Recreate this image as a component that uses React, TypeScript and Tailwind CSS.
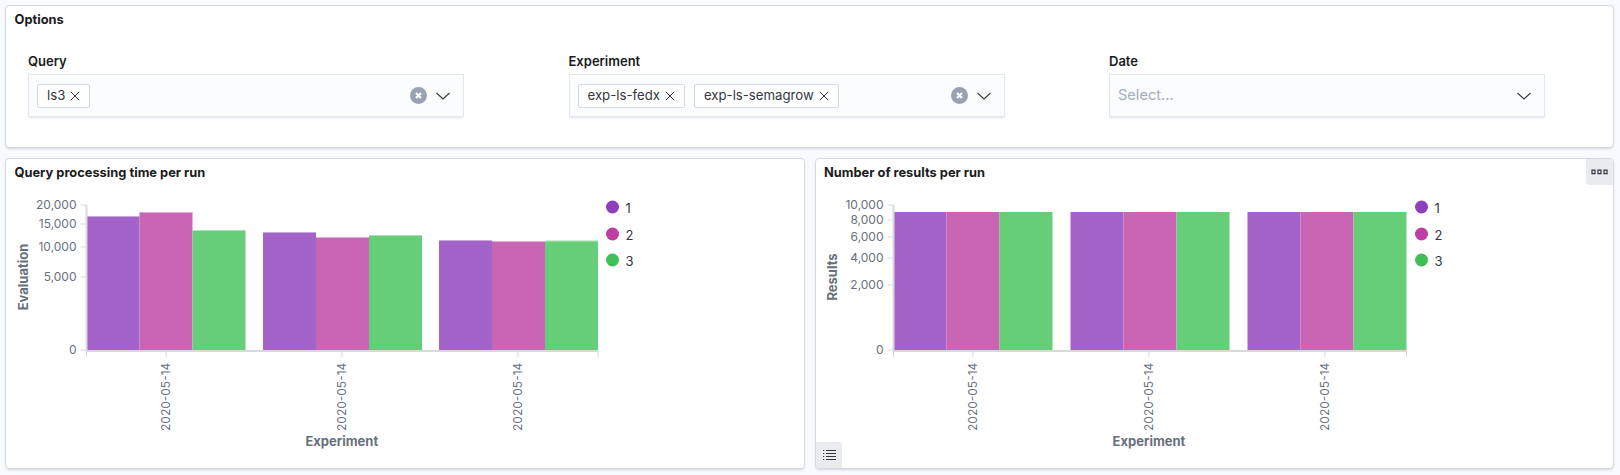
const PURPLE = "#a363c9";
const PINK = "#ca65b4";
const GREEN = "#66cd79";

function Chevron() {
  return (
    <svg width="16" height="16" viewBox="0 0 16 16" className="shrink-0 text-[#343741]">
      <path d="M1.5 5 L8 11 L14.5 5" fill="none" stroke="currentColor" strokeWidth="1.1" />
    </svg>
  );
}

function Cross() {
  return (
    <svg width="10" height="10" viewBox="0 0 10 10" className="shrink-0 text-[#343741]">
      <path d="M.8.8 9.2 9.2M9.2.8.8 9.2" fill="none" stroke="currentColor" strokeWidth="1" />
    </svg>
  );
}

function ClearButton() {
  return (
    <svg width="17" height="17" viewBox="0 0 17 17" className="shrink-0">
      <circle cx="8.5" cy="8.5" r="8.5" fill="#98a2b3" />
      <path d="M6 6l5 5M11 6l-5 5" fill="none" stroke="#fff" strokeWidth="2.2" />
    </svg>
  );
}

function Chip({ label }: { label: string }) {
  return (
    <span className="flex h-6 items-center gap-[5px] rounded-[2px] border border-[#d3dae6] bg-white px-[9px] text-[13.2px] text-[#343741]">
      {label}
      <Cross />
    </span>
  );
}

function Control({ label, chips }: { label: string; chips: string[] }) {
  return (
    <div className="w-[436px]">
      <div className="mb-[4px] h-[18px] text-[13px] leading-[18px] font-semibold text-[#1a1c21]">{label}</div>
      <div className="flex h-[43px] items-center border border-[#e3e7f0] bg-[#fbfcfd] pr-[12px] pl-2 shadow-[0_2px_2px_-1px_rgba(152,162,179,0.3)]">
        <div className="flex flex-1 items-center gap-[9px]">
          {chips.map((c) => (
            <Chip key={c} label={c} />
          ))}
          {chips.length === 0 && <span className="pt-px text-[14.6px] text-[#a5adbb]">Select...</span>}
        </div>
        <div className="flex items-center gap-[8px]">
          {chips.length > 0 && <ClearButton />}
          <Chevron />
        </div>
      </div>
    </div>
  );
}

type ChartProps = {
  axisX: number;
  groups: number[];
  tops: number[];
  ticks: [string, number][];
  yTitle: string;
  yTitleX: number;
  legendX: number;
  titleCenter: number;
  labelCenters: number[];
  highlight?: boolean;
};

// all y values are page pixels; svg starts at y=184, so subtract it
const Y0 = 184;
const BASE = 350;

function Chart({ axisX, groups, tops, ticks, yTitle, yTitleX, legendX, titleCenter, labelCenters, highlight }: ChartProps) {
  const colors = [PURPLE, PINK, GREEN];
  const w = 53;
  return (
    <svg width="796" height="282" className="block" style={{ fontFamily: "Inter, sans-serif" }}>
      {groups.map((gx, g) =>
        colors.map((c, i) => {
          const top = tops[g * 3 + i];
          return (
            <g key={`${g}-${i}`}>
              <rect x={gx + i * w} y={top - Y0} width={w} height={BASE - top} fill={c} />
              {highlight && <rect x={gx + i * w} y={top - Y0} width={w} height="1" fill="#fff" fillOpacity="0.45" />}
            </g>
          );
        }),
      )}
      <path d={`M${axisX} ${205 - Y0}V${BASE + 1 - Y0}`} stroke="#d9d9d9" strokeWidth="2" />
      <path d={`M${axisX} ${BASE + 1 - Y0}H${groups[2] + 3 * w}`} stroke="#d9d9d9" strokeWidth="2" />
      {ticks.map(([label, y]) => (
        <g key={label}>
          <path d={`M${axisX - 6} ${y - Y0}H${axisX}`} stroke="#d9d9d9" strokeWidth="1" />
          <text x={axisX - 10} y={y - Y0 + 4} textAnchor="end" fontSize="12" fill="#69707d">
            {label}
          </text>
        </g>
      ))}
      <path d={`M${axisX} ${BASE - Y0}v7M${groups[2] + 3 * w} ${BASE - Y0}v7`} stroke="#d9d9d9" strokeWidth="1" />
      {labelCenters.map((x) => (
        <g key={x}>
          <path d={`M${x} ${BASE - Y0}v7`} stroke="#d9d9d9" strokeWidth="1" />
          <text transform={`translate(${x + 4} ${431 - Y0}) rotate(-90)`} fontSize="12" fill="#69707d">
            2020-05-14
          </text>
        </g>
      ))}
      <text
        transform={`translate(${yTitleX} ${277 - Y0}) rotate(-90)`}
        textAnchor="middle"
        fontSize="13"
        fontWeight="700"
        fill="#69707d"
      >
        {yTitle}
      </text>
      <text x={titleCenter} y={446 - Y0} textAnchor="middle" fontSize="13" fontWeight="700" fill="#69707d">
        Experiment
      </text>
      {[
        ["1", "#8e3fbc", 207],
        ["2", "#bc3fa3", 234],
        ["3", "#40bf56", 260],
      ].map(([n, c, y]) => (
        <g key={n as string}>
          <circle cx={legendX} cy={(y as number) - Y0} r="6.5" fill={c as string} />
          <text x={legendX + 13} y={(y as number) - Y0 + 6} fontSize="13" fill="#343741">
            {n}
          </text>
        </g>
      ))}
    </svg>
  );
}

function Panel({ title, children }: { title: string; children: React.ReactNode }) {
  return (
    <div className="relative rounded-[4px] border border-[#d3dae6] bg-white shadow-[0_2px_2px_-1px_rgba(152,162,179,0.3),0_1px_5px_-2px_rgba(152,162,179,0.3)]">
      <div className="h-[25px] pt-[5px] pl-[8.5px] text-[12.85px] leading-[18px] font-bold text-[#1a1c21]">{title}</div>
      {children}
    </div>
  );
}

export default function App() {
  return (
    <div className="flex h-[475px] flex-col gap-[10px] bg-[#f9fafd] pt-[5px] pr-[6px] pl-[5px] font-['Inter',sans-serif]">
      <div className="h-[143px] shrink-0">
        <Panel title="Options">
          <div className="flex h-[116px] gap-[104.5px] pt-[21px] pl-[22px]">
            <Control label="Query" chips={["ls3"]} />
            <Control label="Experiment" chips={["exp-ls-fedx", "exp-ls-semagrow"]} />
            <Control label="Date" chips={[]} />
          </div>
        </Panel>
      </div>
      <div className="grid h-[311px] grid-cols-2 gap-[10px]">
        <Panel title="Query processing time per run">
          <Chart
            axisX={80.5}
            groups={[80.5, 257, 433]}
            tops={[216, 212, 230, 232, 237, 235, 240, 241, 240.6]}
            ticks={[
              ["20,000", 205],
              ["15,000", 224],
              ["10,000", 247],
              ["5,000", 277],
              ["0", 350],
            ]}
            yTitle="Evaluation"
            yTitleX={21.5}
            legendX={606.5}
            titleCenter={335.8}
            labelCenters={[160.2, 335.8, 511.8]}
            highlight
          />
        </Panel>
        <Panel title="Number of results per run">
          <Chart
            axisX={77.5}
            groups={[77.5, 254.5, 431.5]}
            tops={[212, 212, 212, 212, 212, 212, 212, 212, 212]}
            ticks={[
              ["10,000", 205],
              ["8,000", 220],
              ["6,000", 237],
              ["4,000", 258],
              ["2,000", 285],
              ["0", 350],
            ]}
            yTitle="Results"
            yTitleX={20.5}
            legendX={605.5}
            titleCenter={333}
            labelCenters={[157, 333, 509]}
          />
          <div className="absolute top-0 right-0 flex h-[26px] w-[27px] items-center justify-center rounded-tr-[4px] rounded-bl-[4px] bg-[#e9ebee]">
            <svg width="17" height="6" viewBox="0 0 17 6">
              <path d="M1 1.2h3v3.4H1zM7 1.2h3v3.4H7zM13 1.2h3v3.4h-3z" fill="none" stroke="#343741" strokeWidth="1.2" />
            </svg>
          </div>
          <div className="absolute bottom-0 left-0 flex h-[26px] w-[26px] items-center justify-center rounded-tr-[4px] rounded-bl-[4px] bg-[#e9ebee]">
            <svg width="14" height="12" viewBox="0 0 14 12">
              <path d="M4 1.5h10M4 4.5h10M4 7.5h10M4 10.5h10" stroke="#343741" strokeWidth="1" />
              <path d="M1 1.5h1.2M1 4.5h1.2M1 7.5h1.2M1 10.5h1.2" stroke="#343741" strokeWidth="1" />
            </svg>
          </div>
        </Panel>
      </div>
    </div>
  );
}
